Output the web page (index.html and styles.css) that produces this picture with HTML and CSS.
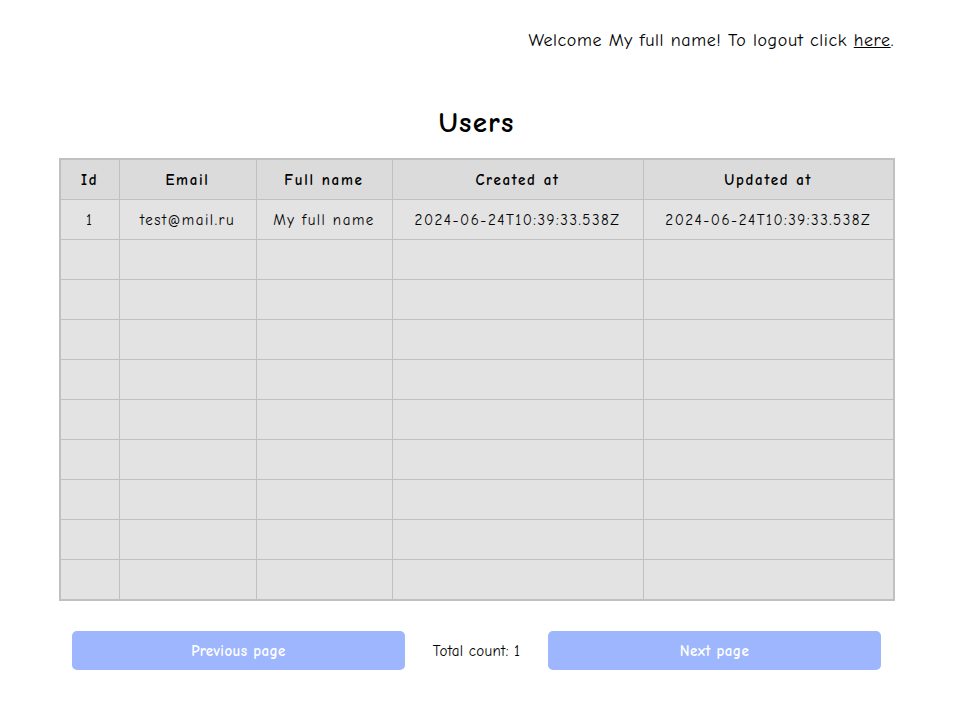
FILE: index.html
```html
<!DOCTYPE html>
<html>
<head>
<meta charset="utf-8">
<link rel="stylesheet" href="styles.css">
</head>
<body>
<div class="page">
  <header class="topbar">
    <p class="welcome">Welcome My full name! To logout click <a href="#" class="logout">here</a>.</p>
  </header>
  <h1 class="title">Users</h1>
  <table class="users">
    <colgroup>
      <col class="c-id"><col class="c-email"><col class="c-name"><col class="c-date"><col class="c-date">
    </colgroup>
    <thead>
      <tr><th>Id</th><th>Email</th><th>Full name</th><th>Created at</th><th>Updated at</th></tr>
    </thead>
    <tbody>
      <tr><td>1</td><td>test@mail.ru</td><td>My full name</td><td>2024-06-24T10:39:33.538Z</td><td>2024-06-24T10:39:33.538Z</td></tr>
      <tr><td></td><td></td><td></td><td></td><td></td></tr>
      <tr><td></td><td></td><td></td><td></td><td></td></tr>
      <tr><td></td><td></td><td></td><td></td><td></td></tr>
      <tr><td></td><td></td><td></td><td></td><td></td></tr>
      <tr><td></td><td></td><td></td><td></td><td></td></tr>
      <tr><td></td><td></td><td></td><td></td><td></td></tr>
      <tr><td></td><td></td><td></td><td></td><td></td></tr>
      <tr><td></td><td></td><td></td><td></td><td></td></tr>
      <tr><td></td><td></td><td></td><td></td><td></td></tr>
    </tbody>
  </table>
  <div class="pager">
    <button class="btn">Previous page</button>
    <span class="total">Total count: 1</span>
    <button class="btn">Next page</button>
  </div>
</div>
</body>
</html>
```
FILE: styles.css
```css
html, body {
  margin: 0;
  padding: 0;
  background: #ffffff;
}
body {
  font-family: "Comic Sans MS", "Comic Neue", "DejaVu Sans", sans-serif;
  color: #000;
}
.page {
  width: 835px;
  padding: 0 67px 0 59px;
}
.topbar {
  display: flex;
  justify-content: flex-end;
  padding-top: 29px;
  height: 43px;
  box-sizing: border-box;
}
.welcome {
  margin: 0;
  font-size: 18px;
  line-height: 24px;
  letter-spacing: 0.6px;
}
.logout {
  color: #000;
}
.title {
  margin: 0;
  padding-top: 62px;
  text-align: center;
  font-size: 29px;
  line-height: 36px;
  font-weight: bold;
  letter-spacing: 1.2px;
  height: 115px;
  box-sizing: border-box;
}
.users {
  width: 834px;
  border-collapse: collapse;
  border: 2px solid #c0c0c0;
  table-layout: fixed;
}
.c-id { width: 59px; }
.c-email { width: 137px; }
.c-name { width: 136px; }
.c-date { width: 251px; }
.users th, .users td {
  border: 1px solid #c0c0c0;
  height: 39px;
  padding: 0;
  text-align: center;
  font-size: 15px;
  letter-spacing: 1.5px;
}
.users th {
  background: #dbdbdb;
  font-weight: bold;
  letter-spacing: 1.7px;
}
.users td {
  background: #e3e3e3;
}
.pager {
  display: flex;
  align-items: center;
  padding: 30px 13px 0 13px;
}
.btn {
  flex: 0 0 333px;
  height: 39px;
  border: none;
  border-radius: 5px;
  background: #9db6fd;
  color: #ffffff;
  font-family: inherit;
  font-weight: bold;
  font-size: 15px;
  letter-spacing: 0.4px;
}
.total {
  flex: 1;
  text-align: center;
  font-size: 15px;
  letter-spacing: 0.3px;
}
```
